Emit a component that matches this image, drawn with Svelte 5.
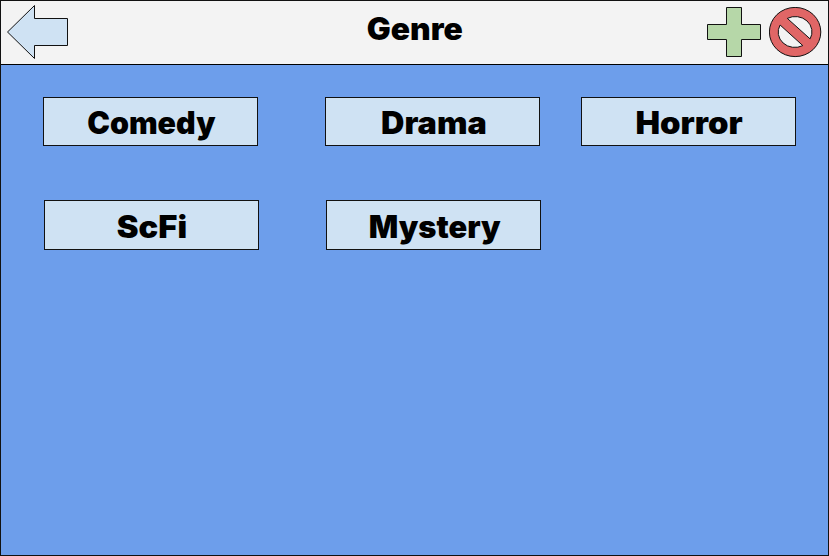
<script>
  // Each label carries the ink span and baseline inside its tile.
  const rows = [
    [
      { name: 'Comedy', x: 44.2, width: 128.3, y: 36 },
      { name: 'Drama', x: 56, width: 105.8, y: 36 },
      { name: 'Horror', x: 54.5, width: 107.3, y: 35.8 }
    ],
    [
      { name: 'ScFi', x: 72.8, width: 70.3, y: 36 },
      { name: 'Mystery', x: 42.7, width: 132, y: 36 }
    ]
  ];
</script>

<div class="screen">
  <header>
    <button class="back" aria-label="Back">
      <svg width="62" height="55" viewBox="6 5 62 55">
        <path d="M7.5 32 34.5 5.5V18.5H67.5V45.5H34.5V58.5Z" fill="#cfe2f3" />
      </svg>
    </button>
    <h1>
      <svg width="120" height="48" viewBox="355 5 120 48">
        <text x="366.8" y="39.8" textLength="96" lengthAdjust="spacingAndGlyphs">Genre</text>
      </svg>
    </h1>
    <div class="actions">
      <button aria-label="Add">
        <svg width="55" height="51" viewBox="707 7 55 51">
          <path d="M726.5 7.5H741.5V24.5H760.5V39.5H741.5V56.5H726.5V39.5H707.5V24.5H726.5Z" fill="#b6d7a8" />
        </svg>
      </button>
      <button aria-label="Remove">
        <svg width="53" height="51" viewBox="769 7 53 51">
          <path
            fill="#e06666"
            fill-rule="evenodd"
            d="M769.4 32A25.7 24.6 0 1 1 820.8 32A25.7 24.6 0 1 1 769.4 32ZM787.3 18.4A16.7 15.3 0 0 1 810.1 38.9ZM780.1 25A16.7 15.3 0 0 0 802.8 45.6Z"
          />
        </svg>
      </button>
    </div>
  </header>

  <main>
    {#each rows as row}
      <div class="row">
        {#each row as genre}
          <button class="tile">
            <svg width="213" height="47" viewBox="1 1 213 47">
              <text x={genre.x} y={genre.y + 1} textLength={genre.width} lengthAdjust="spacingAndGlyphs">{genre.name}</text>
            </svg>
          </button>
        {/each}
      </div>
    {/each}
  </main>
</div>

<style>
  :global(body) {
    margin: 0;
  }
  .screen {
    box-sizing: border-box;
    width: 829px;
    height: 556px;
    border: 1px solid #111;
    background: #6d9eeb;
    overflow: hidden;
  }
  header {
    box-sizing: border-box;
    display: flex;
    align-items: flex-start;
    height: 64px;
    padding: 4px 6px 0 5px;
    background: #f3f3f3;
    border-bottom: 1px solid #000;
  }
  h1 {
    margin: 0 0 0 287px;
  }
  button {
    margin: 0;
    padding: 0;
    border: 0;
    background: none;
  }
  svg {
    display: block;
  }
  path {
    stroke: #111;
    stroke-width: 1;
  }
  text {
    font: 900 30.7px Inter, "DejaVu Sans", sans-serif;
    fill: #000;
  }
  .actions {
    display: flex;
    gap: 7px;
    margin: 2px 0 0 auto;
  }
  .row {
    display: flex;
    padding: 32px 0 0 42px;
  }
  .row + .row {
    padding: 54px 0 0 43px;
  }
  .tile {
    box-sizing: border-box;
    width: 215px;
    height: 49px;
    border: 1px solid #111;
    background: #cfe2f3;
  }
  .row + .row .tile {
    height: 50px;
  }
  .tile:nth-child(2) {
    margin: 0 41px 0 67px;
  }
</style>
